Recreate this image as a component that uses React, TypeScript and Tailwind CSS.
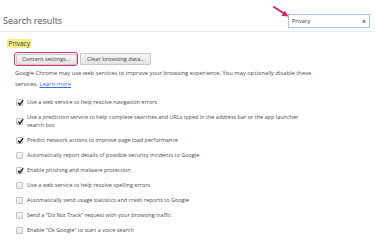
import React from "react";

const items: { text: React.ReactNode; checked: boolean }[] = [
  { text: "Use a web service to help resolve navigation errors", checked: true },
  {
    text: (
      <>
        Use a prediction service to help complete searches and URLs typed in the address bar or the app launcher
        <br />
        search box
      </>
    ),
    checked: true,
  },
  { text: "Predict network actions to improve page load performance", checked: true },
  { text: "Automatically report details of possible security incidents to Google", checked: false },
  { text: "Enable phishing and malware protection", checked: true },
  { text: "Use a web service to help resolve spelling errors", checked: false },
  { text: "Automatically send usage statistics and crash reports to Google", checked: false },
  { text: "Send a \u201cDo Not Track\u201d request with your browsing traffic", checked: false },
  { text: "Enable \u201cOk Google\u201d to start a voice search", checked: false },
];

const Checkbox = ({ checked }: { checked: boolean }) => (
  <span className="relative w-[7px] h-[7px] shrink-0 rounded-[1px] border border-[#c4c4c4] bg-gradient-to-b from-[#fafafa] to-[#e6e6e6]">
    {checked && (
      <svg viewBox="0 0 10 10" className="absolute left-[0px] top-[-1px] w-[7px] h-[7px]">
        <path d="M1.5 5.5 L4 8 L8.8 1.5" fill="none" stroke="#222" strokeWidth="2" />
      </svg>
    )}
  </span>
);

const App = () => {
  return (
    <div className="relative w-[375px] h-[249px] overflow-hidden bg-white font-['Open_Sans',sans-serif] text-[#4a4a4a]">
      <div className="flex items-end justify-between h-[32px] pl-[3px] pr-[5px] pb-[3px] border-b border-[#e8e8e8]">
        <span className="text-[9px] leading-[12px] text-[#555] mb-[1px]">Search results</span>
        <div className="flex items-center justify-between w-[82px] h-[14px] px-[3px] border border-[#a9c1e4] bg-white">
          <span className="text-[5.5px] text-[#333]">Privacy</span>
          <span className="text-[7px] leading-none font-bold text-[#555]">×</span>
        </div>
      </div>

      <svg className="absolute left-[273px] top-[6px]" width="18" height="13" viewBox="0 0 18 13">
        <path d="M1 1 L11 7.5" stroke="#d4285c" strokeWidth="2" strokeLinecap="round" />
        <path d="M15.5 10.5 L8.5 9.8 L11.8 4.8 Z" fill="#d4285c" />
      </svg>

      <div className="mt-[8px] ml-[7px] text-[6.5px] leading-[8px] h-[8px]">
        <span className="bg-[#f7ef8a] px-[1.5px] text-[#333]">Privacy</span>
      </div>

      <div className="flex items-center ml-[14px] mt-[4px]">
        <div className="rounded-[3px] border-[1.5px] border-[#d6336c] p-[0.5px]">
          <div className="flex items-center h-[11px] px-[5.5px] rounded-[1px] border border-[#c9c9c9] bg-gradient-to-b from-[#f6f6f6] to-[#e4e4e4] text-[5.75px] text-[#444]">
            Content settings...
          </div>
        </div>
        <div className="flex items-center h-[12px] ml-[2px] px-[5.5px] rounded-[1px] border border-[#c9c9c9] bg-gradient-to-b from-[#f6f6f6] to-[#e4e4e4] text-[5.75px] text-[#444]">
          Clear browsing data...
        </div>
      </div>

      <p className="pl-[15px] mt-[2px] text-[5.8px] leading-[11px]">
        Google Chrome may use web services to improve your browsing experience. You may optionally disable these
        <br />
        services. <span className="text-[#3b6fd4] underline">Learn more</span>
      </p>

      <div className="mt-[4.5px] pl-[16px]">
        {items.map((item, i) => (
          <div key={i} className="flex items-center gap-[4px] py-[3.5px]">
            <Checkbox checked={item.checked} />
            <span className="text-[5.5px] leading-[8px] whitespace-nowrap">{item.text}</span>
          </div>
        ))}
      </div>
    </div>
  );
};

export default App;
